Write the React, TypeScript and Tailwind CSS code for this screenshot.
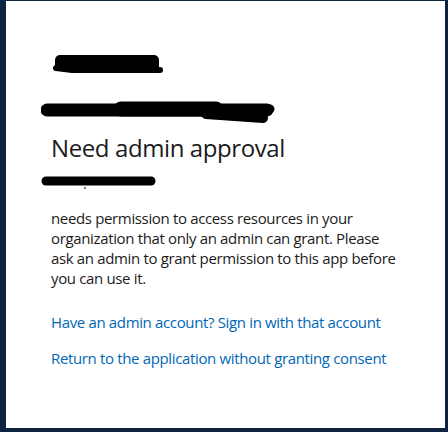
import React from "react";

const font = { fontFamily: '"Segoe UI", "Open Sans", "Noto Sans", sans-serif' };

export default function App() {
  return (
    <div className="h-[432px] w-[448px] bg-[#0e2340] pl-[6px] pt-[1px] pr-[3px] pb-[4px]">
      <div className="h-full w-full bg-white pl-[35px] text-[#1b1b1b]" style={font}>
        {/* redacted app name */}
        <div className="pt-[52px]">
          <svg width={112} height={22} viewBox="0 0 112 22" className="ml-[11px] block">
            <rect x={3} y={2} width={104} height={16} rx={5} fill="#000" />
            <path d="M4 15 L20 17 L108 17" stroke="#000" strokeWidth={6} strokeLinecap="round" fill="none" />
          </svg>
        </div>
        {/* redacted account */}
        <div className="mt-[26px]">
          <svg width={236} height={26} viewBox="0 0 236 26" className="block">
            <g fill="none" stroke="#000" strokeLinecap="round" strokeLinejoin="round">
              <path d="M6 9 L226 9" strokeWidth={13} />
              <path d="M80 8 L175 8" strokeWidth={15} />
              <path d="M165 13 L222 17" strokeWidth={10} />
              <path d="M205 9 L229 8" strokeWidth={9} />
            </g>
          </svg>
        </div>
        <h1 className="mt-[5px] pl-[10px] text-[24px] leading-[32px] font-normal tracking-[-0.4px] text-[#1b1b1b]">
          Need admin approval
        </h1>
        <div className="mt-[12px]">
          <svg width={118} height={14} viewBox="0 0 118 14" className="block">
            <path d="M5 5 L110 5" stroke="#000" strokeWidth={9} strokeLinecap="round" fill="none" />
            <circle cx={44} cy={12} r={1} fill="#555" />
          </svg>
        </div>
        <div className="mt-[18px] pl-[10px] pr-[48px] text-[15px] leading-[20px] tracking-[-0.35px]">
          <p>
            needs permission to access resources in your organization that only an admin can grant. Please
            ask an admin to grant permission to this app before you can use it.
          </p>
          <div className="mt-[24px] flex flex-col gap-[16px] text-[#0067b8]">
            <a href="#">Have an admin account? Sign in with that account</a>
            <a href="#">Return to the application without granting consent</a>
          </div>
        </div>
      </div>
    </div>
  );
}
